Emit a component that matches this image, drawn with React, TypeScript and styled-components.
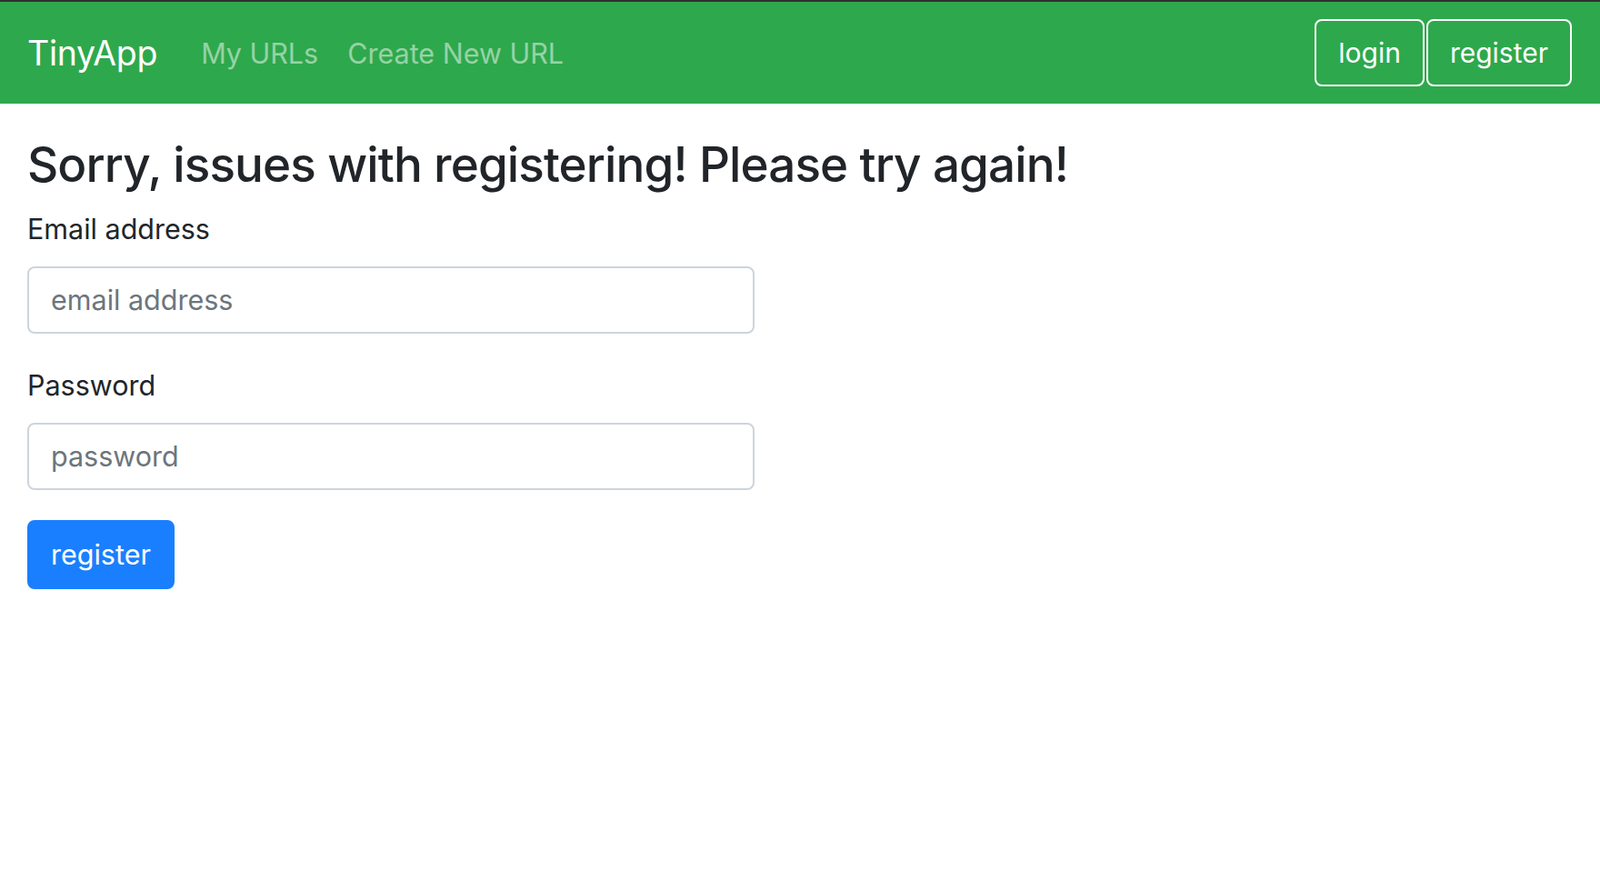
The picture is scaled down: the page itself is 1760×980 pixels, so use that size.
import React from "react";
import styled, { createGlobalStyle } from "styled-components";

const GlobalStyle = createGlobalStyle`
  body {
    margin: 0;
    font-family: Inter, "Noto Sans", "Liberation Sans", sans-serif;
    color: #212529;
    background-color: #fff;
  }
  * {
    box-sizing: border-box;
  }
`;

const Navbar = styled.nav`
  display: flex;
  align-items: center;
  height: 114px;
  padding: 0 31px 0 30px;
  background-color: #2ea84c;
  border-top: 2px solid #2f2f2f;
`;

const Brand = styled.a`
  font-size: 37.5px;
  color: #fff;
  margin-right: 32px;
  text-decoration: none;
  letter-spacing: -0.3px;
`;

const NavLink = styled.a`
  font-size: 30.5px;
  padding: 0 16px;
  color: rgba(255, 255, 255, 0.5);
  text-decoration: none;
`;

const NavRight = styled.div`
  display: flex;
  gap: 2px;
  margin-left: auto;
`;

const OutlineButton = styled.button`
  height: 74px;
  padding: 0 24px;
  font-family: inherit;
  font-size: 30px;
  color: #fff;
  background: transparent;
  border: 2px solid #fff;
  border-radius: 8px;
`;

const Main = styled.main`
  padding: 36px 30px;
`;

const Heading = styled.h3`
  font-size: 53px;
  font-weight: 500;
  line-height: 1.2;
  letter-spacing: -0.9px;
  margin: 0 0 14px;
`;

const FormGroup = styled.div`
  margin-bottom: 33px;
  width: 800px;
`;

const Label = styled.label`
  display: block;
  font-size: 30.5px;
  line-height: 48px;
  margin-bottom: 17px;
`;

const Input = styled.input`
  display: block;
  width: 100%;
  height: 74px;
  padding: 0 24px;
  font-family: inherit;
  font-size: 30.5px;
  color: #495057;
  border: 2px solid #ced4da;
  border-radius: 8px;
  &::placeholder {
    color: #6c757d;
  }
`;

const SubmitButton = styled.button`
  height: 76px;
  padding: 0 24px;
  font-family: inherit;
  font-size: 30.5px;
  color: #fff;
  background-color: #1a7ffe;
  border: 2px solid #1a7ffe;
  border-radius: 8px;
`;

const App = () => {
  return (
    <>
      <GlobalStyle />
      <Navbar>
        <Brand href="#">TinyApp</Brand>
        <NavLink href="#">My URLs</NavLink>
        <NavLink href="#">Create New URL</NavLink>
        <NavRight>
          <OutlineButton>login</OutlineButton>
          <OutlineButton>register</OutlineButton>
        </NavRight>
      </Navbar>
      <Main>
        <Heading>Sorry, issues with registering! Please try again!</Heading>
        <form>
          <FormGroup>
            <Label htmlFor="email">Email address</Label>
            <Input id="email" type="email" placeholder="email address" />
          </FormGroup>
          <FormGroup>
            <Label htmlFor="password">Password</Label>
            <Input id="password" type="password" placeholder="password" />
          </FormGroup>
          <SubmitButton type="submit">register</SubmitButton>
        </form>
      </Main>
    </>
  );
};

export default App;
